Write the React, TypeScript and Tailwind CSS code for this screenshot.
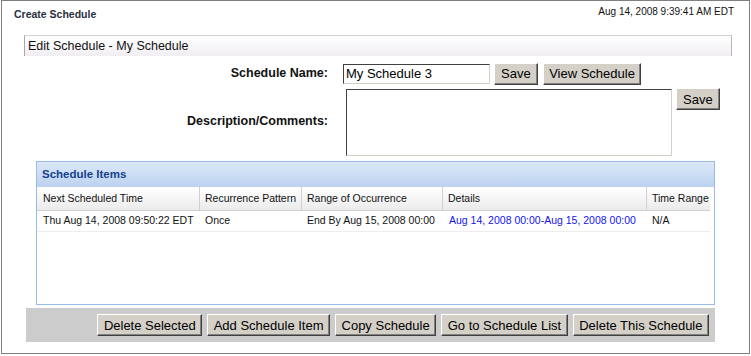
import React from "react";

const cols = [
  { label: "Next Scheduled Time", w: "w-[163px]" },
  { label: "Recurrence Pattern", w: "w-[102px]" },
  { label: "Range of Occurrence", w: "w-[141px]" },
  { label: "Details", w: "w-[204px]" },
  { label: "Time Range", w: "w-[63px]" },
];

function WinButton({ children, className = "" }: { children: React.ReactNode; className?: string }) {
  return (
    <button
      className={`h-[22px] bg-[#d4d0c8] border border-t-white border-l-white border-r-[#404040] border-b-[#404040] shadow-[inset_-1px_-1px_0_#808080] px-[5.5px] text-[13px] leading-none text-black whitespace-nowrap ${className}`}
    >
      {children}
    </button>
  );
}

export default function App() {
  return (
    <div className="w-[751px] h-[356px] bg-white font-['Liberation_Sans',Arial,sans-serif]">
      <div className="ml-[1px] w-[749px] h-[354px] border border-[#7f7f7f] flex flex-col">
        {/* top line */}
        <div className="h-[34px] flex justify-between pl-[12px] pr-[15px]">
          <div className="pt-[7px] text-[10.5px] font-bold text-[#2b2f3f] leading-[13px]">Create Schedule</div>
          <div className="pt-[5px] text-[10px] text-[#111] leading-[12px]">Aug 14, 2008 9:39:41 AM EDT</div>
        </div>

        <div className="pl-[22px] pr-[17px]">
          <div className="h-[21px] border-t border-l border-r border-t-[#d4d4d4] border-l-[#a8a8a8] border-r-[#b8b8b8] bg-gradient-to-b from-white to-[#f1eef3] pl-[3px] pt-[2px] text-[12.5px] leading-[16px] text-[#111]">
            Edit Schedule - My Schedule
          </div>

          {/* form */}
          <div className="mt-[7px] flex items-center h-[21px]">
            <div className="w-[304px] text-right text-[12.5px] font-bold text-[#111]">Schedule Name:</div>
            <input
              readOnly
              value="My Schedule 3"
              className="ml-[15px] w-[147px] h-[20px] border border-t-[#404040] border-l-[#404040] border-r-[#d4d0c8] border-b-[#d4d0c8] px-[2px] text-[13px] text-black outline-none"
            />
            <WinButton className="ml-[4px] !px-[6px]">Save</WinButton>
            <WinButton className="ml-[5px] !px-[5.5px]">View Schedule</WinButton>
          </div>

          <div className="mt-[4px] flex items-start">
            <div className="w-[304px] h-[67px] flex items-center justify-end text-[12.5px] font-bold text-[#111]">
              Description/Comments:
            </div>
            <textarea
              readOnly
              className="ml-[18px] mt-[1px] w-[326px] h-[67px] resize-none border border-t-[#404040] border-l-[#404040] border-r-[#d4d0c8] border-b-[#d4d0c8] outline-none"
            />
            <WinButton className="ml-[4px] !px-[6px]">Save</WinButton>
          </div>

          {/* schedule items */}
          <div className="mt-[5px] ml-[12px] w-[679px] h-[144px] border border-[#99bbe8] flex flex-col">
            <div className="h-[25px] bg-gradient-to-b from-[#dce8f7] to-[#bcd2f0] pl-[5px] flex items-center text-[11.5px] font-bold text-[#15428b]">
              Schedule Items
            </div>
            <div className="flex h-[24px] w-[673px] border-b border-[#d0d0d0] bg-gradient-to-b from-white to-[#ebebeb] text-[10.5px] text-[#111]">
              {cols.map((c, i) => (
                <div
                  key={c.label}
                  className={`${c.w} flex items-center whitespace-nowrap ${i === 0 ? "pl-[6px]" : "pl-[5px]"} ${i < cols.length - 1 ? "border-r border-[#d0d0d0]" : ""}`}
                >
                  {c.label}
                </div>
              ))}
            </div>
            <div className="flex h-[21px] border-b border-[#ededed] w-[673px] text-[10.5px] text-[#111]">
              <div className="w-[163px] pl-[6px] flex items-center whitespace-nowrap">Thu Aug 14, 2008 09:50:22 EDT</div>
              <div className="w-[102px] pl-[5px] flex items-center">Once</div>
              <div className="w-[141px] pl-[5px] flex items-center whitespace-nowrap">End By Aug 15, 2008 00:00</div>
              <div className="w-[204px] pl-[6px] flex items-center whitespace-nowrap text-[#1414f0]">
                Aug 14, 2008 00:00-Aug 15, 2008 00:00
              </div>
              <div className="w-[63px] pl-[5px] flex items-center">N/A</div>
            </div>
          </div>

          {/* button bar */}
          <div className="mt-[3px] ml-[2px] w-[689px] h-[34px] bg-[#cccccc] flex justify-end items-start pt-[6px] pr-[6px] gap-[5px]">
            <WinButton>Delete Selected</WinButton>
            <WinButton>Add Schedule Item</WinButton>
            <WinButton>Copy Schedule</WinButton>
            <WinButton>Go to Schedule List</WinButton>
            <WinButton>Delete This Schedule</WinButton>
          </div>
        </div>
      </div>
    </div>
  );
}
